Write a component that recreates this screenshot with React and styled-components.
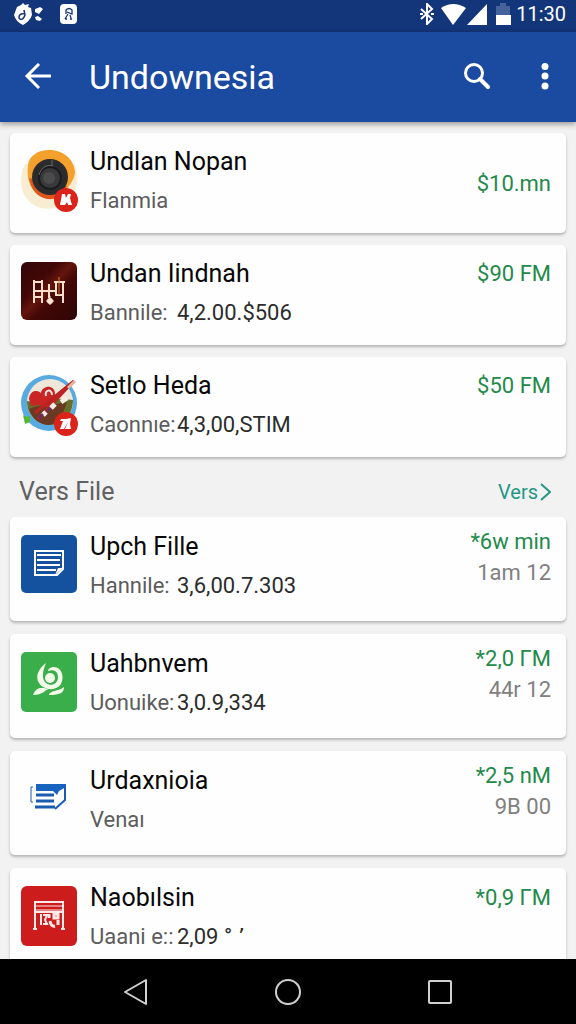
import React from "react";
import styled, { createGlobalStyle } from "styled-components";

const GlobalStyle = createGlobalStyle`
  * { box-sizing: border-box; }
  body { margin: 0; background: #f2f2f3; font-family: Roboto, "Liberation Sans", sans-serif; }
  button { border: 0; padding: 0; background: none; color: inherit; font: inherit; cursor: pointer; }
  svg { display: block; }
`;

const Screen = styled.div`
  display: flex;
  flex-direction: column;
  height: 100vh;
`;

const StatusBar = styled.div`
  display: flex;
  align-items: center;
  flex: none;
  height: 32px;
  padding: 0 10px 4px 14px;
  background: #13357a;
  color: #fff;
`;

const StatusGroup = styled.div`
  display: flex;
  align-items: center;
  gap: ${(p) => p.$gap}px;
  margin-left: ${(p) => (p.$end ? "auto" : "0")};
`;

const Clock = styled.time`
  padding-left: 4px;
  font-size: 20px;
  line-height: 24px;
`;

const AppBar = styled.header`
  position: relative;
  display: flex;
  align-items: center;
  flex: none;
  height: 90px;
  padding: 0 19px 0 24px;
  background: #1b4aa1;
  color: #fff;
  box-shadow: 0 2px 6px rgba(0, 0, 0, 0.4);
`;

const AppTitle = styled.h1`
  flex: 1;
  margin: 0;
  padding-left: 37px;
  font-size: 34px;
  line-height: 40px;
  font-weight: 400;
`;

const BarActions = styled.div`
  display: flex;
  align-items: center;
  gap: 42px;
`;

const Content = styled.main`
  flex: 1;
  min-height: 0;
  overflow-y: auto;
  scrollbar-width: none;
  padding: 11px 10px 0;
`;

const CardList = styled.ul`
  display: flex;
  flex-direction: column;
  gap: ${(p) => (p.$roomy ? 13 : 12)}px;
  margin: 0;
  padding: 0;
  list-style: none;
`;

const Card = styled.li`
  display: flex;
  gap: 12px;
  min-height: ${(p) => (p.$roomy ? 104 : 100)}px;
  padding: ${(p) => (p.$roomy ? 15 : 14)}px 15px 13px 11px;
  border-radius: 5px;
  background: #fefefe;
  box-shadow: 0 2px 3px rgba(0, 0, 0, 0.26);
`;

const Thumb = styled.div`
  flex: none;
  width: 57px;
  height: 60px;
  padding-top: 3px;
`;

const Details = styled.div`
  flex: 1;
  display: flex;
  flex-direction: column;
  gap: 9px;
`;

const Name = styled.h3`
  margin: 0;
  font-size: 25px;
  line-height: 30px;
  font-weight: 400;
  color: #080808;
  white-space: nowrap;
`;

const Meta = styled.p`
  display: flex;
  margin: 0;
  font-size: 22px;
  line-height: 30px;
  color: #5c5c5c;
  white-space: nowrap;
`;

const MetaLabel = styled.span`
  min-width: ${(p) => (p.$column ? 87 : 0)}px;
`;

const MetaValue = styled.span`
  color: #2c2c2c;
`;

const Amounts = styled.div`
  display: flex;
  flex-direction: column;
  align-items: flex-end;
  align-self: ${(p) => (p.$centered ? "center" : "flex-start")};
  gap: 1px;
  margin-top: ${(p) => (p.$stacked ? -5 : 0)}px;
  font-size: 22px;
  line-height: 30px;
  white-space: nowrap;
`;

const Price = styled.span`
  color: #238a4a;
`;

const Note = styled.span`
  color: #808080;
`;

const SectionHeader = styled.div`
  display: flex;
  align-items: center;
  justify-content: space-between;
  height: 60px;
  padding: 9px 15px 0 9px;
`;

const SectionTitle = styled.h2`
  margin: 0;
  font-size: 25px;
  line-height: 30px;
  font-weight: 400;
  color: #616161;
`;

const MoreLink = styled.a`
  display: flex;
  align-items: center;
  gap: 2px;
  font-size: 20px;
  line-height: 30px;
  color: #259783;
  text-decoration: none;
`;

const NavBar = styled.nav`
  display: flex;
  align-items: center;
  justify-content: center;
  gap: 120px;
  flex: none;
  height: 65px;
  background: #000;
`;

const Badge = ({ children }) => (
  <g>
    <circle cx="45" cy="50" r="12" fill="#dc2319" />
    <g fill="#fff">{children}</g>
  </g>
);

const SpeakerArt = () => (
  <svg width="57" height="64" viewBox="0 0 57 64" aria-hidden="true">
    <g transform="translate(0 -8)">
      <path d="M4 22C-3 36-1 52 10 61c12 10 34 7 42-8 6-12 5-22 2-30z" fill="#f8edd2" />
      <path d="M28 8C17 8 8 14 7 23c-2 15 3 28 15 32 8 3 15 2 20-3 4-6 12-14 12-22C53 16 41 8 28 8z" fill="#f4a02d" />
      <path d="M8 36c2 11 8 19 18 21 9 1 16-4 20-13z" fill="#df561c" />
      <circle cx="29" cy="35" r="18" fill="#2b2b2d" />
      <circle cx="29" cy="36" r="11" fill="#39393b" stroke="#1b1b1d" strokeWidth="2" />
      <path d="M18 33c2-8 9-11 14-9M31 18v6" fill="none" stroke="#666" strokeWidth="1" />
      <circle cx="28" cy="36" r="6" fill="#4b4b4c" />
    </g>
    <Badge>
      <path d="M41 44h3l1 4 2-4h3l-1 4 2 7h-4l-1-3-2 3h-5z" />
    </Badge>
  </svg>
);

const MaroonArt = () => (
  <svg width="56" height="59" viewBox="0 0 56 59" aria-hidden="true">
    <defs>
      <linearGradient id="maroon" x1="0" y1="0" x2="1" y2="1">
        <stop offset="0" stopColor="#330607" />
        <stop offset=".35" stopColor="#430807" />
        <stop offset=".47" stopColor="#64150d" />
        <stop offset=".6" stopColor="#430807" />
        <stop offset="1" stopColor="#2d0504" />
      </linearGradient>
    </defs>
    <rect width="56" height="58" rx="6" fill="url(#maroon)" />
    <g fill="none" stroke="#f7dfcb" strokeWidth="2">
      <path d="M13 18v23M12 20h9M12 29h15M13 35h8M21 18v23M28 22v14M28 29h6M33 20h11M34 33h9M35 20v14M42 20v21" />
      <path d="M38 15v18" stroke="#d47a3f" strokeWidth="1" />
    </g>
    <circle cx="29" cy="39" r="3" fill="#ffe4cf" />
    <path d="M25 39h8M29 34v9" stroke="#ffe4cf" strokeWidth="1" />
  </svg>
);

const PlateArt = () => (
  <svg width="57" height="64" viewBox="0 0 57 64" aria-hidden="true">
    <circle cx="28" cy="29" r="28" fill="#58abe0" />
    <circle cx="29" cy="28" r="23" fill="#eee7da" />
    <path d="M6 27c6 1 12 2 18-1 9-3 17-1 28 0 0 14-9 25-22 25C16 51 6 41 6 27z" fill="#667028" />
    <path d="M8 35c12-6 24-2 38-8-3 13-9 23-18 24C18 51 11 44 8 35z" fill="#693a21" />
    <path d="M8 25c1-8 7-10 12-6 1-8 14-9 14 1v10l-9 3-7-2-8 1z" fill="#c92525" />
    <path d="M25 22c-2-6 6-8 6-1" fill="none" stroke="#f6e5df" strokeWidth="2" />
    <path d="M17 45L48 12M14 39L53 7" stroke="#bb2222" strokeWidth="3" />
    <path d="M54 7l-7 7" stroke="#e4b59a" strokeWidth="3" />
    <path d="M22 41l3-3M30 34l4-4M40 28l6-4" stroke="#f4ece9" strokeWidth="5" />
    <path d="M18 44l4-4M26 37l3-3" stroke="#5d2e7a" strokeWidth="2" />
    <path d="M2 41l4 2 3-1v6l-5 2z" fill="#54b631" />
    <Badge>
      <path d="M40 45h5l5-1-1 6 1 5h-6l3-7-4 7h-4l3-8h-3z" />
    </Badge>
  </svg>
);

const DocumentArt = () => (
  <svg width="56" height="58" viewBox="0 0 56 58" aria-hidden="true">
    <rect width="56" height="58" rx="5" fill="#14519f" />
    <path d="M14 16h28v18l-6 6H14z" fill="none" stroke="#fff" strokeWidth="2" />
    <path d="M16 20h24M16 25h23M16 30h23M16 35h19" stroke="#fff" strokeWidth="2" />
    <path d="M42 33h-5l-3 7z" fill="#fff" />
  </svg>
);

const LeafArt = () => (
  <svg width="56" height="60" viewBox="0 0 56 60" aria-hidden="true">
    <rect width="56" height="60" rx="5" fill="#39ae4b" />
    <path d="M25 11c-8 6-11 14-7 20 5 8 18 8 22 1 4-8 0-17-7-17-3 0-6 2-6 4 6-2 10 1 10 6 0 7-7 10-12 6-5-4-3-13 0-20z" fill="#f3fbe9" />
    <circle cx="29" cy="26" r="5" fill="#f3fbe9" />
    <path d="M12 43c3-8 8-8 16-6-4 1-6 6-16 6zM28 42c5-5 9-2 15-7 0 6-4 8-15 8z" fill="#f3fbe9" />
  </svg>
);

const PapersArt = () => (
  <svg width="56" height="58" viewBox="0 0 56 58" aria-hidden="true">
    <path d="M15 15h30v3l-7 4-2 4-4-4H15z" fill="#1763bd" />
    <g fill="none" stroke="#1b5cb0" strokeWidth="3">
      <path d="M15 26h18M15 32h18M14 38h20" />
      <path d="M44 17v14l-10 9" strokeWidth="2" />
      <path d="M12 18h-2v15h2" strokeWidth="1" />
    </g>
  </svg>
);

const GateArt = () => (
  <svg width="56" height="60" viewBox="0 0 56 60" aria-hidden="true">
    <rect width="56" height="60" rx="6" fill="#cd1c1c" />
    <g fill="none" stroke="#ffeaea" strokeWidth="2">
      <path d="M14 43V16h28v27M12 43h4M40 43h4" />
      <path d="M14 20h28M14 24h28" strokeWidth="1" />
      <path d="M15 26h26M20 28v11M22 29h4l-2 5 2 4h-4" />
      <path d="M28 28v4M29 35q1 6 5 5M33 28h4v4h-4zM37 34v5" strokeWidth="3" />
    </g>
  </svg>
);

const BackIcon = () => (
  <svg width="28" height="28" viewBox="0 0 28 28" aria-hidden="true">
    <path d="M15 1L3 13l12 12M4 13h23" fill="none" stroke="#fff" strokeWidth="3" />
  </svg>
);

const SearchIcon = () => (
  <svg width="28" height="28" viewBox="0 0 28 28" aria-hidden="true">
    <circle cx="11" cy="10" r="8.5" fill="none" stroke="#fff" strokeWidth="3" />
    <path d="M17 16l8 8" stroke="#fff" strokeWidth="4" strokeLinecap="round" />
  </svg>
);

const MoreIcon = () => (
  <svg width="24" height="28" viewBox="0 0 24 28" fill="#fff" aria-hidden="true">
    <circle cx="12" cy="3.5" r="3.5" />
    <circle cx="12" cy="13" r="3.5" />
    <circle cx="12" cy="23" r="3.5" />
  </svg>
);

const NoticeIcons = () => (
  <>
    <svg width="30" height="24" viewBox="0 0 30 24" aria-hidden="true">
      <path d="M9 1l2 2 4-1-1 3 3 1 1 7q-2 6-9 10Q2 20 0 13l3-8 4-2z" fill="#fff" />
      <path d="M10 8l1 5c-2 6-6 5-6 2 0-2 2-4 5-3" fill="none" stroke="#13357a" strokeWidth="1.5" />
      <path d="M21 7l3-1 2-1 3 2-4 5-4-2zM21 15l3-1 4 3-2 2-4-1z" fill="#fff" />
    </svg>
    <svg width="17" height="20" viewBox="0 0 17 20" aria-hidden="true">
      <rect width="17" height="20" rx="4" fill="#fff" />
      <path d="M6 10V6q3-3 6 0v4l-5-2M8 10l-3 5M10 11l1 3M5 15h2M10 15h2" fill="none" stroke="#13357a" strokeWidth="1.3" />
    </svg>
  </>
);

const SystemIcons = () => (
  <>
    <svg width="21" height="22" viewBox="0 0 21 22" aria-hidden="true">
      <path d="M2 6l11 10-5 5V1l5 5L2 16M1 11h3M12 11h3" fill="none" stroke="#fff" strokeWidth="2" />
    </svg>
    <svg width="25" height="22" viewBox="0 0 25 22" aria-hidden="true">
      <path d="M0 5Q12-3 25 5L12 22z" fill="#fff" />
    </svg>
    <svg width="20" height="22" viewBox="0 0 20 22" aria-hidden="true">
      <path d="M20 1v21H0z" fill="#fff" />
    </svg>
    <svg width="23" height="22" viewBox="0 0 23 22" aria-hidden="true">
      <path d="M8 3h4V0h6v3h4v9H8z" fill="#46629b" />
      <path d="M8 12h15v10H8z" fill="#fff" />
    </svg>
  </>
);

const featured = [
  { name: "Undlan Nopan", label: "Flanmia", price: "$10.mn", centered: true, Art: SpeakerArt },
  { name: "Undan Iindnah", label: "Bannile:", value: "4,2.00.$506", price: "$90 FM", Art: MaroonArt },
  { name: "Setlo Heda", label: "Caonnıe:", value: "4,3,00,STIM", price: "$50 FM", Art: PlateArt },
];

const files = [
  { name: "Upch Fille", label: "Hannile:", value: "3,6,00.7.303", price: "*6w min", note: "1am 12", Art: DocumentArt },
  { name: "Uahbnvem", label: "Uonuike:", value: "3,0.9,334", price: "*2,0 ΓM", note: "44r 12", Art: LeafArt },
  { name: "Urdaxnioia", label: "Venaı", price: "*2,5 nM", note: "9B 00", Art: PapersArt },
  { name: "Naobılsin", label: "Uaani e::", value: "2,09 ° ՚", price: "*0,9 ΓM", Art: GateArt },
];

function Row({ item, roomy }) {
  const { name, label, value, price, note, centered, Art } = item;
  return (
    <Card $roomy={roomy}>
      <Thumb>
        <Art />
      </Thumb>
      <Details>
        <Name>{name}</Name>
        <Meta>
          <MetaLabel $column={Boolean(value)}>{label}</MetaLabel>
          {value && <MetaValue>{value}</MetaValue>}
        </Meta>
      </Details>
      <Amounts $centered={centered} $stacked={Boolean(note)}>
        <Price>{price}</Price>
        {note && <Note>{note}</Note>}
      </Amounts>
    </Card>
  );
}

export default function App() {
  return (
    <Screen>
      <GlobalStyle />
      <StatusBar>
        <StatusGroup $gap={16}>
          <NoticeIcons />
        </StatusGroup>
        <StatusGroup $gap={1} $end>
          <SystemIcons />
          <Clock>11:30</Clock>
        </StatusGroup>
      </StatusBar>
      <AppBar>
        <button type="button" aria-label="Back">
          <BackIcon />
        </button>
        <AppTitle>Undownesia</AppTitle>
        <BarActions>
          <button type="button" aria-label="Search">
            <SearchIcon />
          </button>
          <button type="button" aria-label="More options">
            <MoreIcon />
          </button>
        </BarActions>
      </AppBar>
      <Content>
        <CardList>
          {featured.map((item) => (
            <Row key={item.name} item={item} />
          ))}
        </CardList>
        <SectionHeader>
          <SectionTitle>Vers File</SectionTitle>
          <MoreLink href="#files">
            Vers
            <svg width="11" height="18" viewBox="0 0 11 18" aria-hidden="true">
              <path d="M1 1l9 8-9 8" fill="none" stroke="currentColor" strokeWidth="2" />
            </svg>
          </MoreLink>
        </SectionHeader>
        <CardList $roomy id="files">
          {files.map((item) => (
            <Row key={item.name} item={item} roomy />
          ))}
        </CardList>
      </Content>
      <NavBar>
        <button type="button" aria-label="Back">
          <svg width="32" height="32" viewBox="0 0 32 32" aria-hidden="true">
            <path d="M26 4v24L5 16z" fill="none" stroke="#d0d0d0" strokeWidth="2" strokeLinejoin="round" />
          </svg>
        </button>
        <button type="button" aria-label="Home">
          <svg width="32" height="32" viewBox="0 0 32 32" aria-hidden="true">
            <circle cx="16" cy="16" r="12" fill="none" stroke="#d0d0d0" strokeWidth="2" />
          </svg>
        </button>
        <button type="button" aria-label="Recent apps">
          <svg width="32" height="32" viewBox="0 0 32 32" aria-hidden="true">
            <rect x="5" y="5" width="22" height="22" rx="1" fill="none" stroke="#d0d0d0" strokeWidth="2" />
          </svg>
        </button>
      </NavBar>
    </Screen>
  );
}
